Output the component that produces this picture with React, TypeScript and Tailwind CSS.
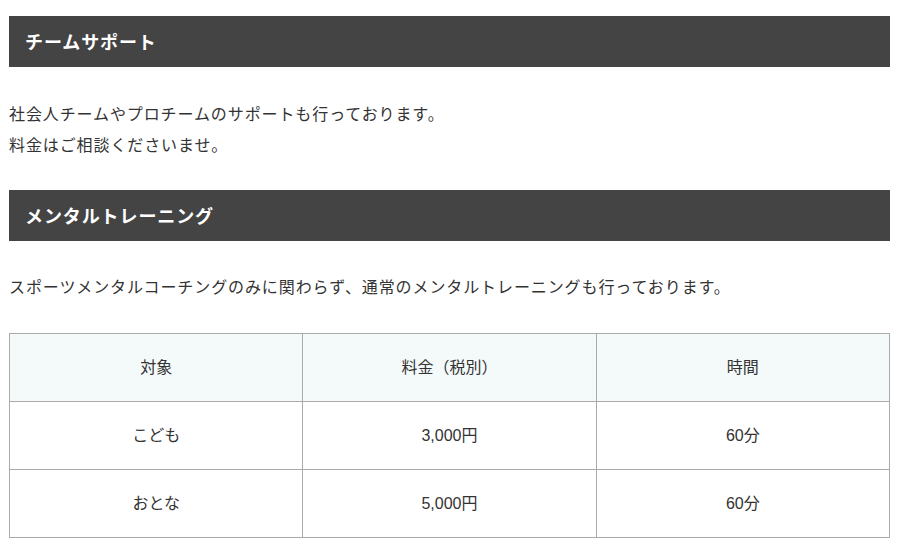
export default function App() {
  const font = { fontFamily: '"Liberation Sans", "Noto Sans CJK JP", "Noto Sans", sans-serif' };
  const rows = [
    ["こども", "3,000円", "60分"],
    ["おとな", "5,000円", "60分"],
  ];
  return (
    <div className="bg-white w-[904px] h-[554px] pt-4 pl-[9px] pr-[14px] text-[#333]" style={font}>
      <h2 className="h-[51px] bg-[#444444] text-white font-bold text-[18px] tracking-[0.05em] flex items-center pl-4 pt-[3px]">
        チームサポート
      </h2>
      <p className="mt-[32px] mb-[-1px] text-[16px] leading-[31px] tracking-[0.9px]">
        社会人チームやプロチームのサポートも行っております。
        <br />
        料金はご相談くださいませ。
      </p>
      <h2 className="mt-[30px] h-[51px] bg-[#444444] text-white font-bold text-[18px] tracking-[0.05em] flex items-center pl-4 pt-[3px]">
        メンタルトレーニング
      </h2>
      <p className="mt-[31px] mb-[-1px] text-[16px] leading-[31px] tracking-[0.9px]">
        スポーツメンタルコーチングのみに関わらず、通常のメンタルトレーニングも行っております。
      </p>
      <table className="mt-[31px] w-full border-collapse table-fixed text-[16px]">
        <thead>
          <tr className="bg-[#f4f9fa]">
            {["対象", "料金（税別）", "時間"].map((h) => (
              <th key={h} className="h-[68px] border border-[#aaaaaa] font-normal text-center">
                {h}
              </th>
            ))}
          </tr>
        </thead>
        <tbody>
          {rows.map((r, i) => (
            <tr key={i}>
              {r.map((c, j) => (
                <td key={j} className="h-[68px] border border-[#aaaaaa] text-center">
                  {c}
                </td>
              ))}
            </tr>
          ))}
        </tbody>
      </table>
    </div>
  );
}
